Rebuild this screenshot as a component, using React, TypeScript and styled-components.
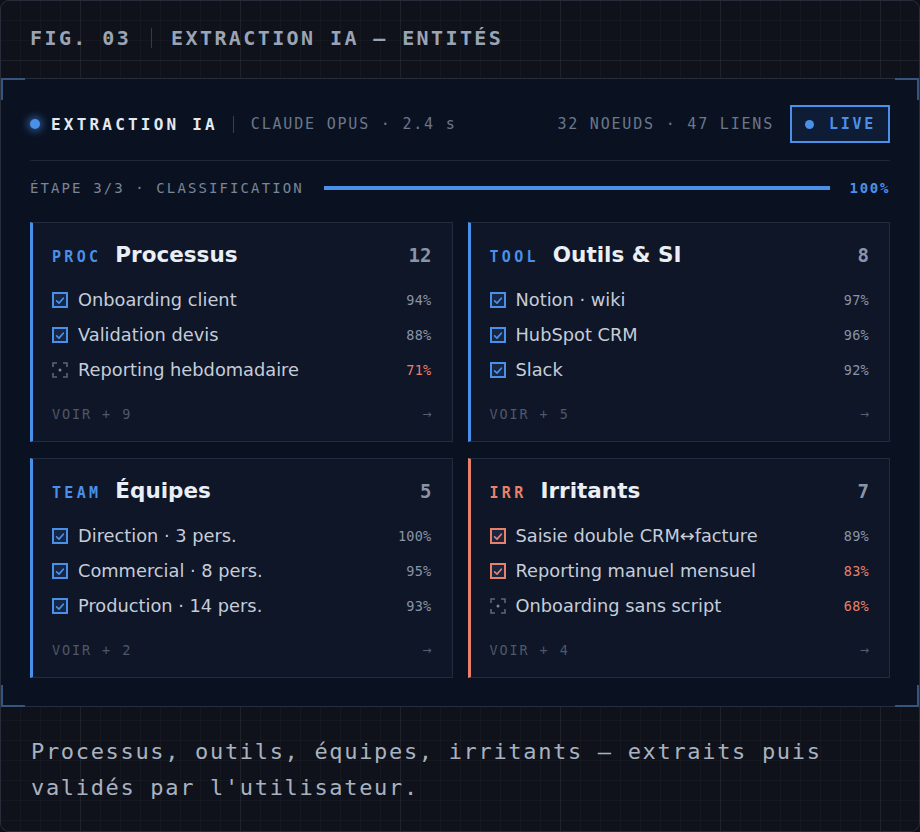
import React from "react";
import styled, { createGlobalStyle } from "styled-components";

const GlobalStyle = createGlobalStyle`
  html, body { margin: 0; padding: 0; background: #0d1017; }
  * { box-sizing: border-box; }
`;

const MONO = `"DejaVu Sans Mono", "Liberation Mono", monospace`;
const SANS = `"DejaVu Sans", "Noto Sans", sans-serif`;
const BLUE = "#4a90e8";
const SALMON = "#e8806a";

const Frame = styled.div`
  width: 920px;
  height: 832px;
  border: 1px solid #272d39;
  border-radius: 9px;
  overflow: hidden;
  display: flex;
  flex-direction: column;
  background-color: #0f121a;
  background-image:
    linear-gradient(rgba(255, 255, 255, 0.045) 1px, transparent 1px),
    linear-gradient(90deg, rgba(255, 255, 255, 0.045) 1px, transparent 1px),
    linear-gradient(rgba(255, 255, 255, 0.022) 1px, transparent 1px),
    linear-gradient(90deg, rgba(255, 255, 255, 0.022) 1px, transparent 1px);
  background-size: 160px 160px, 160px 160px, 20px 20px, 20px 20px;
  background-position: 79px 59px, 79px 59px, -1px -1px, -1px -1px;
`;

const FigHeader = styled.header`
  height: 77px;
  flex: none;
  display: flex;
  align-items: center;
  padding: 0 29px 4px 29px;
  font-family: ${MONO};
  font-weight: bold;
  font-size: 20px;
  letter-spacing: 0.12em;
  color: #9aa4b5;
`;

const FigSep = styled.span`
  display: inline-block;
  width: 1px;
  height: 20px;
  background: #343b48;
  margin: 0 19px 0 20px;
`;

const Panel = styled.section`
  position: relative;
  flex: none;
  background: #0a1222;
  border-top: 1px solid #262e3c;
  border-bottom: 1px solid #262e3c;
  padding: 26px 29px 28px 29px;
`;

const Corner = styled.span<{ $v: "top" | "bottom"; $h: "left" | "right" }>`
  position: absolute;
  width: 24px;
  height: 22px;
  ${(p) => p.$v}: -1px;
  ${(p) => p.$h}: 0;
  border-${(p) => p.$v}: 2px solid #35557f;
  border-${(p) => p.$h}: 2px solid #35557f;
`;

const TopRow = styled.div`
  display: flex;
  align-items: center;
  height: 38px;
`;

const Divider = styled.div`
  height: 1px;
  background: #1e2839;
  margin-top: 17px;
`;

const LiveDot = styled.span<{ $glow?: boolean; $size: number }>`
  display: inline-block;
  width: ${(p) => p.$size}px;
  height: ${(p) => p.$size}px;
  border-radius: 50%;
  background: ${BLUE};
  flex: none;
  ${(p) => (p.$glow ? `box-shadow: 0 0 7px 3px rgba(74,144,232,0.45);` : "")}
`;

const PanelTitle = styled.span`
  font-family: ${MONO};
  font-weight: bold;
  font-size: 16px;
  letter-spacing: 0.2em;
  color: #e4e9f1;
  margin-left: 11px;
`;

const MetaSep = styled.span`
  display: inline-block;
  width: 1px;
  height: 17px;
  background: #354052;
  margin: 0 17px 0 15px;
`;

const Meta = styled.span`
  font-family: ${MONO};
  font-size: 15px;
  letter-spacing: 0.12em;
  color: #6c7789;
`;

const Spacer = styled.div`
  flex: 1;
`;

const LiveBadge = styled.div`
  display: flex;
  align-items: center;
  gap: 15px;
  height: 38px;
  width: 100px;
  margin-left: 16px;
  padding-left: 13px;
  border: 2px solid ${BLUE};
  background: #0e1c36;
  font-family: ${MONO};
  font-weight: bold;
  font-size: 15px;
  letter-spacing: 0.18em;
  color: ${BLUE};
`;

const StepRow = styled.div`
  display: flex;
  align-items: center;
  height: 20px;
  margin-top: 17px;
`;

const StepLabel = styled.span`
  font-family: ${MONO};
  font-size: 14px;
  letter-spacing: 0.15em;
  color: #7a8597;
  white-space: nowrap;
`;

const Track = styled.div`
  flex: 1;
  height: 4px;
  margin: 0 20px 0 20px;
  background: #1b2538;
`;

const Fill = styled.div`
  height: 100%;
  background: ${BLUE};
`;

const StepPct = styled.span`
  font-family: ${MONO};
  font-weight: bold;
  font-size: 14px;
  letter-spacing: 0.12em;
  color: ${BLUE};
`;

const Grid = styled.div`
  display: grid;
  grid-template-columns: 1fr 1fr;
  column-gap: 15px;
  row-gap: 16px;
  margin-top: 24px;
`;

const Card = styled.article<{ $accent: string }>`
  background: #0e1628;
  border: 1px solid #222c3e;
  border-left: 3px solid ${(p) => p.$accent};
  padding: 17px 20px 17px 19px;
  display: flex;
  flex-direction: column;
`;

const CardHead = styled.div`
  display: flex;
  align-items: baseline;
  height: 30px;
  padding-top: 2px;
`;

const Tag = styled.span<{ $color: string }>`
  font-family: ${MONO};
  font-weight: bold;
  font-size: 15px;
  letter-spacing: 0.22em;
  color: ${(p) => p.$color};
  margin-right: 14px;
`;

const CardTitle = styled.span`
  font-family: ${SANS};
  font-weight: bold;
  font-size: 21.5px;
  color: #eaeef5;
  flex: 1;
`;

const Count = styled.span`
  font-family: ${MONO};
  font-weight: bold;
  font-size: 19px;
  color: #8a94a6;
`;

const Items = styled.ul`
  list-style: none;
  margin: 12px 0 0 0;
  padding: 0;
`;

const Item = styled.li`
  display: flex;
  align-items: center;
  height: 35px;
`;

const ItemText = styled.span`
  font-family: ${SANS};
  font-size: 17.8px;
  color: #c6cdd8;
  margin-left: 10px;
  flex: 1;
  white-space: nowrap;
`;

const Pct = styled.span<{ $low: boolean }>`
  font-family: ${MONO};
  font-size: 13.5px;
  letter-spacing: 0.02em;
  color: ${(p) => (p.$low ? SALMON : "#8a94a5")};
`;

const CardFoot = styled.div`
  display: flex;
  align-items: center;
  justify-content: space-between;
  height: 20px;
  margin-top: 17px;
  font-family: ${MONO};
  font-size: 13.5px;
  letter-spacing: 0.14em;
  color: #4e5869;
`;

const Arrow = styled.span`
  font-family: ${SANS};
  font-size: 11px;
  letter-spacing: 0;
  color: #566072;
`;

const Caption = styled.p`
  margin: 0;
  padding: 27px 29px 0 30px;
  font-family: ${MONO};
  font-size: 22px;
  line-height: 36px;
  letter-spacing: 0.076em;
  color: #a9b2c0;
`;

const CheckBox: React.FC<{ color: string }> = ({ color }) => (
  <svg width="16" height="16" viewBox="0 0 16 16" style={{ flex: "none" }}>
    <rect x="1" y="1" width="14" height="14" fill="rgba(74,144,232,0.14)" stroke={color} strokeWidth="2" />
    <path d="M4.6 8.9 L7 11.1 L11.3 6.2" fill="none" stroke={color} strokeWidth="1.7" strokeLinecap="round" strokeLinejoin="round" />
  </svg>
);

const Pending: React.FC = () => (
  <svg width="16" height="16" viewBox="0 0 16 16" style={{ flex: "none" }}>
    <g fill="none" stroke="#5b6577" strokeWidth="1.6">
      <path d="M1 5 V1 H5" />
      <path d="M11 1 H15 V5" />
      <path d="M15 11 V15 H11" />
      <path d="M5 15 H1 V11" />
    </g>
    <circle cx="8" cy="8" r="1.5" fill="#7c8698" />
  </svg>
);

type Entry = { label: string; pct: number; ok: boolean };
type Group = { tag: string; title: string; count: number; more: number; accent: string; items: Entry[] };

const groups: Group[] = [
  {
    tag: "PROC",
    title: "Processus",
    count: 12,
    more: 9,
    accent: BLUE,
    items: [
      { label: "Onboarding client", pct: 94, ok: true },
      { label: "Validation devis", pct: 88, ok: true },
      { label: "Reporting hebdomadaire", pct: 71, ok: false },
    ],
  },
  {
    tag: "TOOL",
    title: "Outils & SI",
    count: 8,
    more: 5,
    accent: BLUE,
    items: [
      { label: "Notion · wiki", pct: 97, ok: true },
      { label: "HubSpot CRM", pct: 96, ok: true },
      { label: "Slack", pct: 92, ok: true },
    ],
  },
  {
    tag: "TEAM",
    title: "Équipes",
    count: 5,
    more: 2,
    accent: BLUE,
    items: [
      { label: "Direction · 3 pers.", pct: 100, ok: true },
      { label: "Commercial · 8 pers.", pct: 95, ok: true },
      { label: "Production · 14 pers.", pct: 93, ok: true },
    ],
  },
  {
    tag: "IRR",
    title: "Irritants",
    count: 7,
    more: 4,
    accent: SALMON,
    items: [
      { label: "Saisie double CRM↔facture", pct: 89, ok: true },
      { label: "Reporting manuel mensuel", pct: 83, ok: true },
      { label: "Onboarding sans script", pct: 68, ok: false },
    ],
  },
];

export default function App() {
  return (
    <>
      <GlobalStyle />
      <Frame>
        <FigHeader>
          FIG. 03
          <FigSep />
          EXTRACTION IA — ENTITÉS
        </FigHeader>
        <Panel>
          <Corner $v="top" $h="left" />
          <Corner $v="top" $h="right" />
          <Corner $v="bottom" $h="left" />
          <Corner $v="bottom" $h="right" />
          <TopRow>
            <LiveDot $glow $size={10} />
            <PanelTitle>EXTRACTION IA</PanelTitle>
            <MetaSep />
            <Meta>CLAUDE OPUS · 2.4 s</Meta>
            <Spacer />
            <Meta>32 NOEUDS · 47 LIENS</Meta>
            <LiveBadge>
              <LiveDot $size={9} />
              LIVE
            </LiveBadge>
          </TopRow>
          <Divider />
          <StepRow>
            <StepLabel>ÉTAPE 3/3 · CLASSIFICATION</StepLabel>
            <Track>
              <Fill style={{ width: "100%" }} />
            </Track>
            <StepPct>100%</StepPct>
          </StepRow>
          <Grid>
            {groups.map((g) => (
              <Card key={g.tag} $accent={g.accent}>
                <CardHead>
                  <Tag $color={g.accent}>{g.tag}</Tag>
                  <CardTitle>{g.title}</CardTitle>
                  <Count>{g.count}</Count>
                </CardHead>
                <Items>
                  {g.items.map((it) => (
                    <Item key={it.label}>
                      {it.ok ? <CheckBox color={g.accent} /> : <Pending />}
                      <ItemText>{it.label}</ItemText>
                      <Pct $low={it.pct < 85}>{it.pct}%</Pct>
                    </Item>
                  ))}
                </Items>
                <CardFoot>
                  <span>VOIR + {g.more}</span>
                  <Arrow>→</Arrow>
                </CardFoot>
              </Card>
            ))}
          </Grid>
        </Panel>
        <Caption>
          Processus, outils, équipes, irritants — extraits puis validés par l'utilisateur.
        </Caption>
      </Frame>
    </>
  );
}
